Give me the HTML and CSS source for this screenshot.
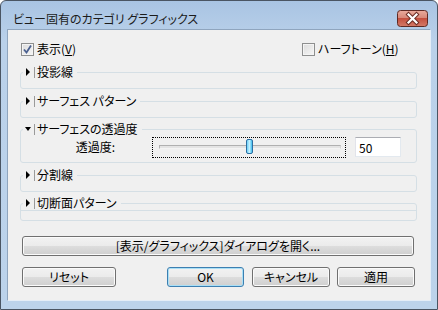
FILE: index.html
```html
<!DOCTYPE html>
<html lang="ja">
<head>
    <meta charset="UTF-8">
    <title>ビュー固有のカテゴリ グラフィックス</title>
    <link rel="stylesheet" href="styles.css">
</head>
<body>
<div class="window">
    <div class="titlebar">
        <span class="title">ビュー固有のカテゴリ グラフィックス</span>
        <span class="close-btn">
            <svg width="31" height="17" viewBox="0 0 31 17">
                <defs>
                    <linearGradient id="closeGrad" x1="0" y1="0" x2="0" y2="1">
                        <stop offset="0" stop-color="#e9ab9d"/>
                        <stop offset="0.45" stop-color="#d8897a"/>
                        <stop offset="0.5" stop-color="#c4503f"/>
                        <stop offset="1" stop-color="#d47a68"/>
                    </linearGradient>
                </defs>
                <rect x="0.5" y="0.5" width="30" height="16" rx="3" fill="url(#closeGrad)" stroke="#5e2a24"/>
                <path d="M11.5 4.5 L19.5 12.5 M19.5 4.5 L11.5 12.5" stroke="#6b2d25" stroke-width="4.2" stroke-linecap="square"/>
                <path d="M11.5 4.5 L19.5 12.5 M19.5 4.5 L11.5 12.5" stroke="#ffffff" stroke-width="2.2" stroke-linecap="square"/>
            </svg>
        </span>
    </div>

    <div class="client">
        <div class="check-row">
            <label class="check first">
                <span class="box">
                    <svg width="11" height="11" viewBox="0 0 11 11">
                        <path d="M2 5.5 L4.5 8.5 L9 1.5" fill="none" stroke="#4a6090" stroke-width="1.8"/>
                    </svg>
                </span>
                表示(<u>V</u>)
            </label>
            <label class="check">
                <span class="box"></span>
                ハーフトーン(<u>H</u>)
            </label>
        </div>

        <fieldset class="group g1">
            <legend><span class="arrow"><i class="tri-right"></i></span><span class="sep"></span>投影線</legend>
        </fieldset>

        <fieldset class="group g2">
            <legend><span class="arrow"><i class="tri-right"></i></span><span class="sep"></span>サーフェス パターン</legend>
        </fieldset>

        <fieldset class="group g3 open">
            <legend><span class="arrow"><i class="tri-down"></i></span><span class="sep"></span>サーフェスの透過度</legend>
            <div class="slider-row">
                <span class="slider-label">透過度:</span>
                <div class="slider">
                    <div class="track">
                        <span class="thumb" style="left: 50%;"></span>
                    </div>
                </div>
                <input class="num-input" type="text" value="50">
            </div>
        </fieldset>

        <fieldset class="group g4">
            <legend><span class="arrow"><i class="tri-right"></i></span><span class="sep"></span>分割線</legend>
        </fieldset>

        <fieldset class="group g5">
            <legend><span class="arrow"><i class="tri-right"></i></span><span class="sep"></span>切断面パターン</legend>
            <div class="inner-line"></div>
        </fieldset>

        <button class="btn wide">[表示/グラフィックス]ダイアログを開く...</button>

        <div class="btn-row">
            <button class="btn reset">リセット</button>
            <button class="btn ok">OK</button>
            <button class="btn cancel">キャンセル</button>
            <button class="btn apply">適用</button>
        </div>
    </div>
</div>
</body>
</html>
```

FILE: styles.css
```css
body {
    margin: 0;
    background-color: #ffffff;
    font-family: "Noto Sans CJK JP", "Liberation Sans", sans-serif;
    font-size: 12px;
    line-height: 14px;
    font-feature-settings: "palt";
    color: #000000;
}

.window {
    width: 438px;
    height: 310px;
    box-sizing: border-box;
    border: 1px solid #4a5563;
    border-radius: 6px 6px 0 0;
    background: linear-gradient(#a9c4e3, #bad1ea 40px, #bcd3eb);
    padding: 0 6px 8px 6px;
    display: flex;
    flex-direction: column;
}

.titlebar {
    height: 28px;
    display: flex;
    align-items: flex-start;
    justify-content: space-between;
}

.title {
    margin: 11px 0 0 6px;
    color: #1b1b1b;
}

.close-btn {
    display: block;
    width: 31px;
    height: 17px;
    margin: 9px 3px 0 0;
}

.close-btn svg {
    display: block;
}

.client {
    flex: 1;
    background-color: #f0f0f0;
    border: 1px solid;
    border-color: #8fa5be #e4edf7 #e4edf7 #8fa5be;
    padding: 12px 13px 0 12px;
    display: flex;
    flex-direction: column;
}

/* checkboxes */
.check-row {
    display: flex;
    height: 14px;
    align-items: center;
}

.check {
    display: flex;
    align-items: center;
    white-space: nowrap;
}

.check.first {
    width: 281px;
    margin-left: 1px;
}

.box {
    width: 13px;
    height: 13px;
    box-sizing: border-box;
    border: 1px solid #8e8f8f;
    background: linear-gradient(135deg, #dcdcdc, #f6f6f6);
    box-shadow: inset 0 0 0 1px #f4f4f4;
    margin-right: 3px;
    display: flex;
    align-items: center;
    justify-content: center;
}

.box svg {
    display: block;
}

/* collapsible groups */
.group {
    margin: 0;
    padding: 0 4px 9px 2px;
    border: 1px solid #d5dfe5;
    border-radius: 3px;
    min-width: 0;
}

.g1 { margin-top: 9px; }
.g2 { margin-top: 5px; }
.g3 { margin-top: 4px; padding-bottom: 4px; }
.g4 { margin-top: 5px; }
.g5 { margin-top: 4px; padding-bottom: 0; }

legend {
    padding: 0 4px 0 0;
    height: 14px;
    display: flex;
    align-items: center;
    white-space: nowrap;
}

.arrow {
    width: 11px;
    height: 14px;
    display: flex;
    align-items: center;
}

.tri-right {
    margin-left: 3px;
    border-left: 4px solid #000;
    border-top: 4px solid transparent;
    border-bottom: 4px solid transparent;
}

.tri-down {
    margin-left: 2px;
    border-top: 4px solid #000;
    border-left: 3px solid transparent;
    border-right: 3px solid transparent;
}

.sep {
    width: 1px;
    height: 11px;
    background-color: #9a9a9a;
    margin-right: 2px;
}

.inner-line {
    height: 9px;
    border-top: 1px solid #d5dfe5;
    margin: 0 -4px 0 -2px;
}

/* slider row */
.slider-row {
    display: flex;
    align-items: center;
    height: 22px;
}

.slider-label {
    width: 92px;
    text-align: right;
}

.slider {
    width: 194px;
    height: 21px;
    box-sizing: border-box;
    margin-left: 37px;
    border: 1px dotted #000;
    padding: 0 4px 0 6px;
    display: flex;
    align-items: center;
}

.track {
    flex: 1;
    height: 4px;
    box-sizing: border-box;
    border: 1px solid;
    border-color: #b0b0b0 #d6d6d6 #f4f4f4 #b0b0b0;
    background-color: #e4e4e4;
    position: relative;
}

.thumb {
    position: absolute;
    top: -7px;
    width: 7px;
    height: 15px;
    margin-left: -4px;
    box-sizing: border-box;
    border: 1px solid #2c6fa3;
    border-radius: 2px;
    background: linear-gradient(90deg, #6fd2f7, #c4f0ff 50%, #3fbdee);
}

.num-input {
    width: 46px;
    height: 20px;
    box-sizing: border-box;
    margin-left: 9px;
    border: 1px solid;
    border-color: #abadb3 #e3e9ef #e3e9ef #e2e3ea;
    padding: 0 0 0 3px;
    font: inherit;
    background-color: #ffffff;
    outline: none;
}

/* buttons */
.btn {
    height: 20px;
    box-sizing: border-box;
    border: 1px solid #707070;
    border-radius: 3px;
    background: linear-gradient(#f2f2f2, #ebebeb 50%, #dddddd 50%, #cfcfcf);
    box-shadow: inset 0 0 0 1px #fbfbfb;
    font: inherit;
    font-feature-settings: "palt";
    color: #000000;
    padding: 0;
    cursor: pointer;
}

.btn.wide {
    width: 392px;
    margin: 15px 0 0 2px;
}

.btn-row {
    display: flex;
    margin: 11px 0 0 2px;
}

.btn.reset { width: 94px; }
.btn.ok { width: 77px; margin-left: auto; margin-right: 8px; }
.btn.cancel { width: 78px; margin-right: 7px; }
.btn.apply { width: 78px; margin-right: 2px; }

.btn.ok {
    border-color: #3c7fb1;
    box-shadow: inset 0 0 0 1px #a9dff6;
}
```
